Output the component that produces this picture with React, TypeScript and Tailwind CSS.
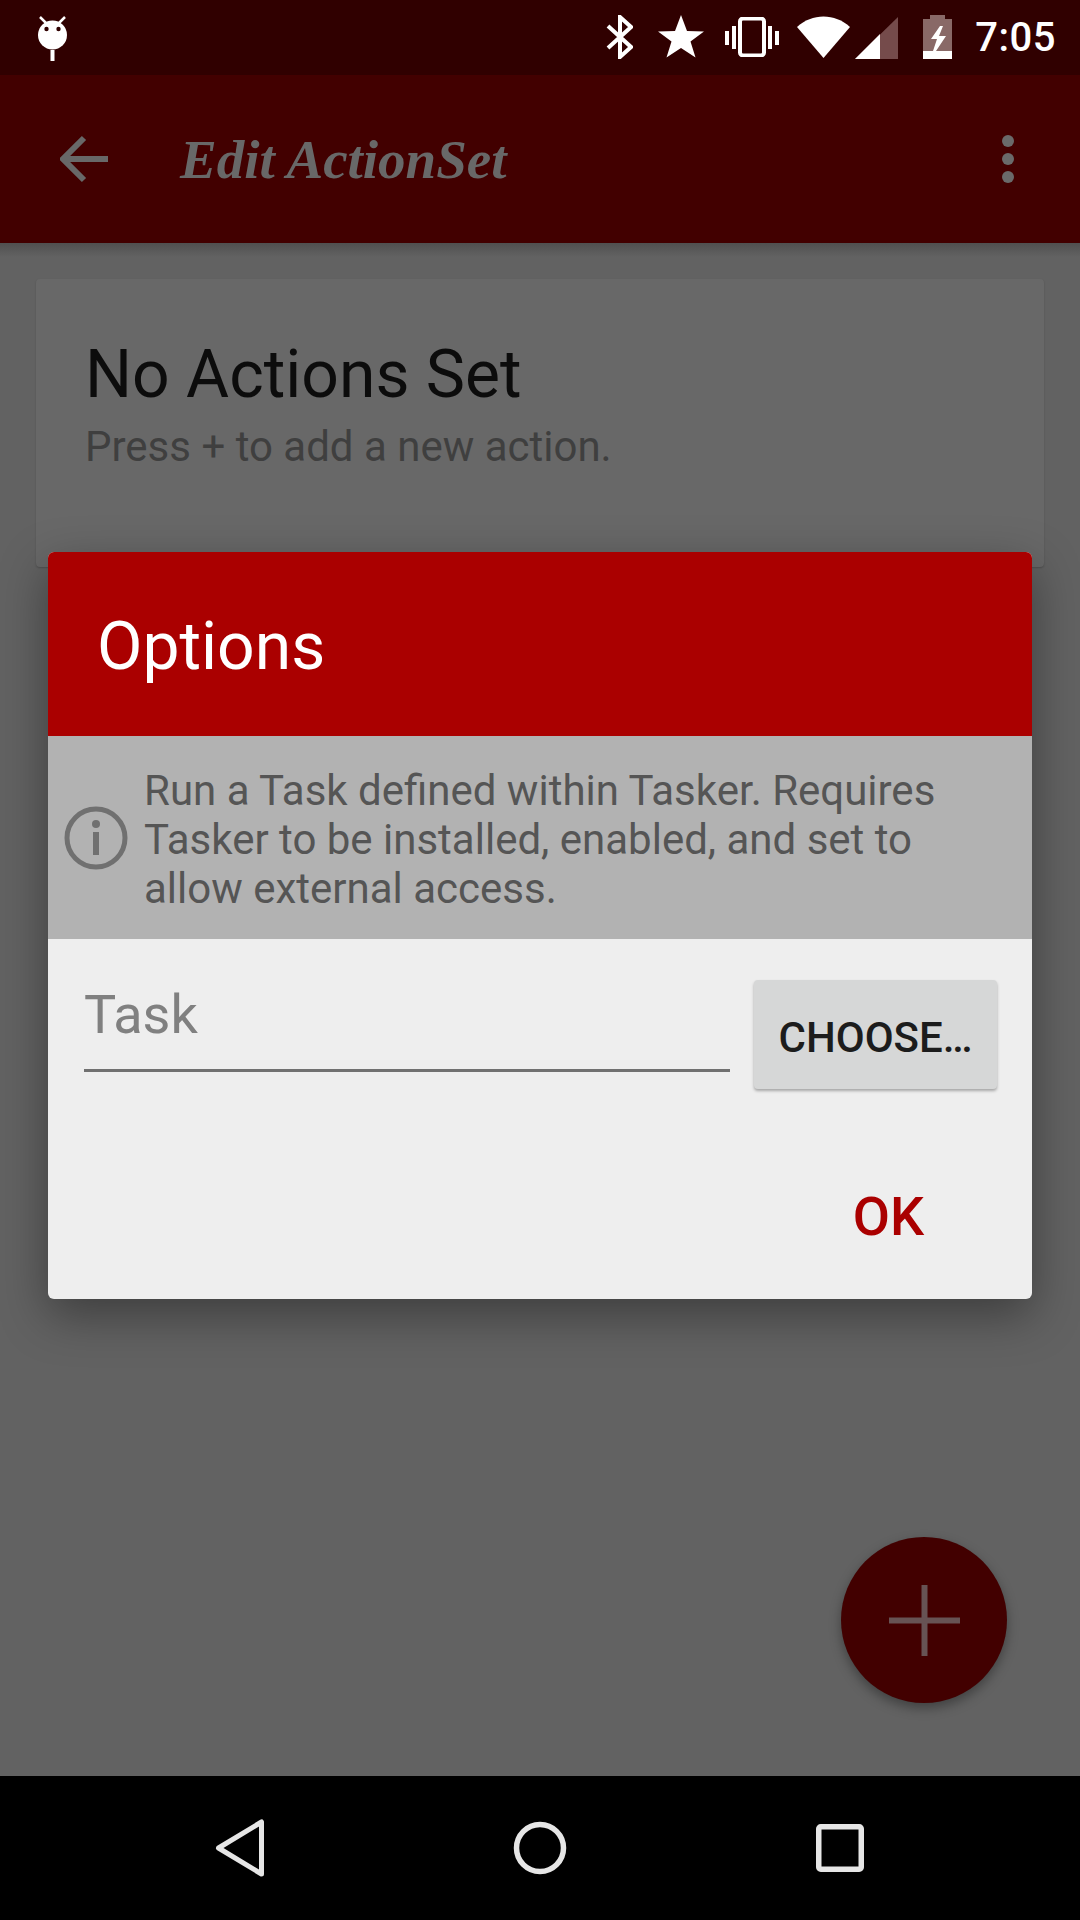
export default function App() {
  return (
    <div className="relative flex h-[1920px] w-[1080px] flex-col overflow-hidden bg-black font-['Roboto',sans-serif]">
      {/* status bar */}
      <div className="flex h-[75px] shrink-0 items-start bg-[#300000] pr-[24px] text-white">
        <svg className="ml-[36px] mt-[13px] h-[50px] w-[34px]" viewBox="0 0 34 50" fill="#fff">
          <circle cx="16.5" cy="22" r="14.5" />
          <path d="M4 4 L10 10 M29 4 L23 10" stroke="#fff" strokeWidth="2.5" />
          <rect x="14.5" y="37" width="4" height="11" />
          <circle cx="10.5" cy="16" r="2.2" fill="#300000" />
          <circle cx="22.5" cy="16" r="2.2" fill="#300000" />
        </svg>
        <div className="flex-1" />
        <svg className="mt-[15px] h-[44px] w-[27px]" viewBox="0 0 27 44" fill="none" stroke="#fff" strokeWidth="4">
          <path d="M2 11 L25 32 L14 42 V2 L25 12 L2 33" />
        </svg>
        <svg className="ml-[25px] mt-[14px] h-[44px] w-[46px]" viewBox="0 0 46 44" fill="#fff">
          <path d="M23 1 L29 17 L46 17.5 L32.5 27.5 L37.5 43.5 L23 34 L8.5 43.5 L13.5 27.5 L0 17.5 L17 17 Z" />
        </svg>
        <svg className="ml-[21px] mt-[17px] h-[40px] w-[54px]" viewBox="0 0 54 40" fill="#fff">
          <rect x="0" y="14" width="4" height="14" />
          <rect x="7" y="9" width="4" height="23" />
          <rect x="43" y="9" width="4" height="23" />
          <rect x="50" y="14" width="4" height="14" />
          <rect x="15" y="1.5" width="24" height="37" rx="3" fill="none" stroke="#fff" strokeWidth="4" />
        </svg>
        <svg className="ml-[18px] mt-[16px] h-[43px] w-[102px]" viewBox="0 0 102 43" fill="#fff">
          <path d="M0 11 C15 -3 38 -3 53 11 L26.5 42 Z" />
          <path d="M58 43 L101 1 V43 Z" fill="#754b4b" />
          <path d="M58 43 L83 18 V43 Z" />
        </svg>
        <svg className="ml-[24px] mt-[15px] h-[44px] w-[29px]" viewBox="0 0 29 44">
          <path d="M0 4 H7 V0 H22 V4 H29 V44 H0 Z" fill="#896967" />
          <rect x="0" y="36" width="29" height="8" fill="#fff" />
          <path d="M17 11 L8 24 H14 L10 36 H13 L23 21 H16 L20 11 Z" fill="#fff" />
        </svg>
        <span className="ml-[23px] mt-[16px] text-[40px] leading-[44px] font-medium tracking-[0.5px]">7:05</span>
      </div>

      {/* app bar */}
      <div className="relative flex h-[168px] shrink-0 items-center bg-[#420000]">
        <svg className="ml-[60px] h-[48px] w-[48px]" viewBox="0 0 48 48" fill="none" stroke="#686868" strokeWidth="6">
          <path d="M48 24 H3 M24 3 L3 24 L24 45" />
        </svg>
        <span className="ml-[72px] font-['Liberation_Serif',serif] text-[55px] leading-none font-bold text-[#686868] italic">Edit ActionSet</span>
        <div className="ml-auto mr-[66px] flex flex-col gap-[6px]">
          <div className="h-[12px] w-[12px] rounded-full bg-[#6a6a6a]" />
          <div className="h-[12px] w-[12px] rounded-full bg-[#6a6a6a]" />
          <div className="h-[12px] w-[12px] rounded-full bg-[#6a6a6a]" />
        </div>
      </div>

      {/* content */}
      <div className="relative flex-1 bg-[#626262]">
        <div className="absolute inset-x-0 top-0 h-[14px] bg-gradient-to-b from-[#505050] to-transparent" />
        <div className="relative mx-[36px] mt-[36px] h-[288px] rounded-[4px] bg-[#686868] pl-[49px] pt-[57px] shadow-[0_1px_2px_rgba(0,0,0,0.2)]">
          <p className="text-[66px] leading-[78px] text-[#0c0c0c]">No Actions Set</p>
          <p className="mt-[8px] text-[42px] leading-[50px] text-[#3f3f3f]">Press + to add a new action.</p>
        </div>
      </div>

      {/* dialog */}
      <div className="absolute left-[48px] top-[552px] w-[984px] overflow-hidden rounded-[6px] bg-[#eeeeee] shadow-[0_16px_48px_rgba(0,0,0,0.38)]">
        <div className="flex h-[184px] items-center bg-[#aa0000] pl-[49px] pt-[5px] text-[66px] text-white">Options</div>
        <div className="flex h-[203px] items-center bg-[#b2b2b2]">
          <svg className="ml-[16px] h-[64px] w-[64px] shrink-0" viewBox="0 0 64 64" fill="none" stroke="#707070" strokeWidth="5">
            <circle cx="32" cy="32" r="29" />
            <rect x="29" y="26" width="6" height="23" fill="#707070" stroke="none" />
            <circle cx="32" cy="18" r="4" fill="#707070" stroke="none" />
          </svg>
          <p className="ml-[16px] w-[840px] pt-[4px] text-[42px] leading-[49px] text-[#555555]">
            Run a Task defined within Tasker. Requires
            <br />
            Tasker to be installed, enabled, and set to
            <br />
            allow external access.
          </p>
        </div>
        <div className="flex h-[360px] flex-col">
          <div className="flex h-[150px] items-start pl-[36px] pt-[41px]">
            <div className="h-[92px] w-[646px] border-b-[3px] border-[#707070] text-[54px] leading-[70px] text-[#808080]">Task</div>
            <div className="ml-[24px] flex h-[109px] w-[243px] items-center justify-center rounded-[4px] bg-[#d6d7d7] pt-[6px] text-[42px] font-medium whitespace-nowrap text-[#1c1c1c] shadow-[0_2px_3px_rgba(0,0,0,0.3)]">
              CHOOSE…
            </div>
          </div>
          <div className="flex flex-1 items-start justify-end pr-[108px] pt-[97px]">
            <span className="text-[54px] leading-[62px] font-medium text-[#aa0000]">OK</span>
          </div>
        </div>
      </div>

      {/* FAB */}
      <div className="absolute left-[841px] top-[1537px] flex h-[166px] w-[166px] items-center justify-center rounded-full bg-[#420000] shadow-[0_5px_12px_rgba(0,0,0,0.35)]">
        <svg className="h-[71px] w-[71px]" viewBox="0 0 71 71" fill="#675354">
          <rect x="32.5" y="0" width="6" height="71" />
          <rect x="0" y="32.5" width="71" height="6" />
        </svg>
      </div>

      {/* nav bar */}
      <div className="flex h-[144px] shrink-0 items-center bg-black">
        <svg className="ml-[214px] h-[60px] w-[52px]" viewBox="0 0 52 60" fill="none" stroke="#e6e6e6" strokeWidth="5" strokeLinejoin="round">
          <path d="M4.5 30 L47.5 4 V56 Z" />
        </svg>
        <svg className="ml-[247px] h-[54px] w-[54px]" viewBox="0 0 54 54" fill="none" stroke="#e6e6e6" strokeWidth="5.5">
          <circle cx="27" cy="27" r="23.5" />
        </svg>
        <svg className="ml-[249px] h-[48px] w-[48px]" viewBox="0 0 48 48" fill="none" stroke="#e6e6e6" strokeWidth="5.5">
          <rect x="2.75" y="2.75" width="42.5" height="42.5" rx="2" />
        </svg>
      </div>
    </div>
  );
}
